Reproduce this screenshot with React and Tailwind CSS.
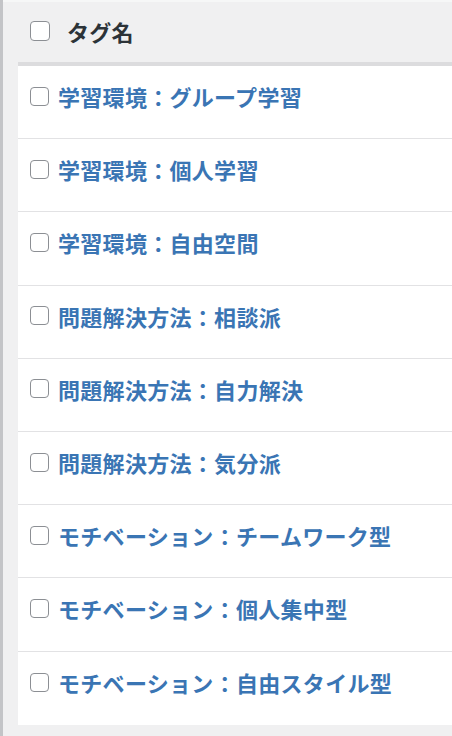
import React from "react";

const tags = [
  "学習環境：グループ学習",
  "学習環境：個人学習",
  "学習環境：自由空間",
  "問題解決方法：相談派",
  "問題解決方法：自力解決",
  "問題解決方法：気分派",
  "モチベーション：チームワーク型",
  "モチベーション：個人集中型",
  "モチベーション：自由スタイル型",
];

const font = { fontFamily: '"Noto Sans CJK JP", "Noto Sans", sans-serif' };

const Box = ({ size }) => (
  <span
    className={`${size} shrink-0 rounded-[4px] border-[1.5px] border-[#8c8f94] bg-white`}
  ></span>
);

export default function App() {
  return (
    <div
      className="h-[736px] w-[452px] overflow-hidden border-l-[3px] border-[#c3c4c7] bg-[#f0f0f1]"
      style={font}
    >
      <div className="h-[2px] bg-[#f6f7f7]"></div>
      <div className="flex h-[60px] items-center pb-[3px] pl-[27px]">
        <Box size="size-[20px]" />
        <span className="ml-[17px] text-[22px] font-bold leading-none tracking-[0.3px] text-[#2c3338]">
          タグ名
        </span>
      </div>
      <div className="ml-[15px] border-t-4 border-[#dcdcde] bg-white">
        {tags.map((tag, i) => (
          <div
            key={tag}
            className={`flex h-[73.2px] items-center pb-[12px] pl-[12px] ${
              i < tags.length - 1 ? "border-b border-[#e2e2e4]" : ""
            }`}
          >
            <Box size="size-[19px]" />
            <span className="ml-[9px] text-[22px] font-bold leading-none tracking-[0.3px] text-[#3a75b4]">
              {tag}
            </span>
          </div>
        ))}
      </div>
    </div>
  );
}
